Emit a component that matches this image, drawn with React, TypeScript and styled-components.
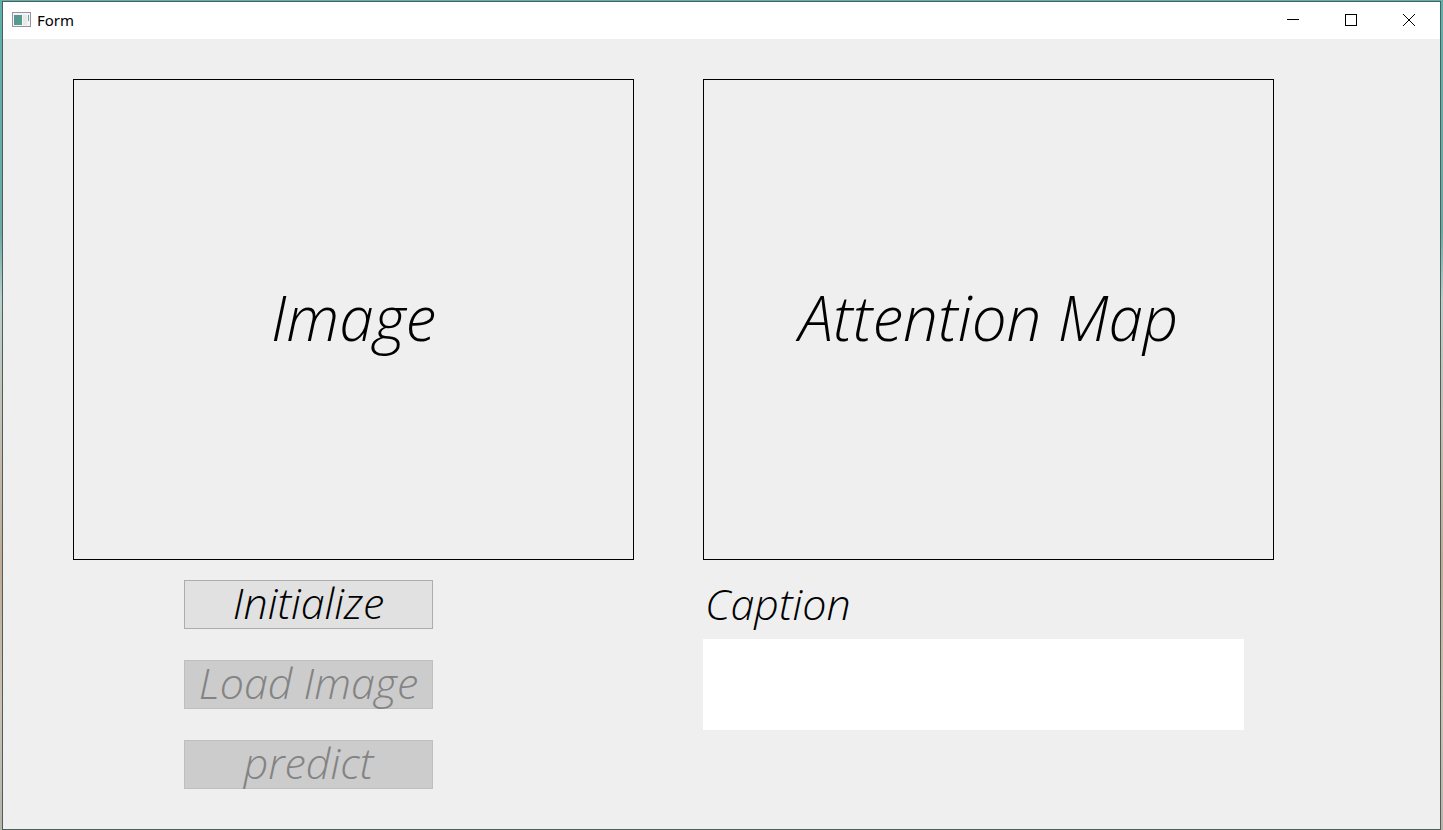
import React from "react";
import styled, { createGlobalStyle } from "styled-components";

const hand = `"Ink Free", "Open Sans", "Noto Sans", sans-serif`;

const GlobalStyle = createGlobalStyle`
  * { box-sizing: border-box; }
  body { margin: 0; }
`;

const Desktop = styled.div`
  min-height: 100vh;
  display: flex;
  padding: 1px 2px 0;
  background: linear-gradient(
    to bottom,
    #5fb0ab 0%,
    #6aaaa5 28%,
    #b9cfca 36%,
    #c4bfb4 50%,
    #c0ab94 68%,
    #c9c0b2 85%,
    #b8b4aa 100%
  );
`;

const Window = styled.div`
  flex: 1;
  display: flex;
  flex-direction: column;
  border: 1px solid #4d5f5c;
  background: #efefef;
`;

const TitleBar = styled.header`
  display: flex;
  align-items: center;
  height: 37px;
  padding: 0 2px 2px 9px;
  background: #fff;
`;

const Title = styled.h1`
  flex: 1;
  margin: 0 0 0 6px;
  font: 400 15px/20px "Noto Sans", "Open Sans", sans-serif;
  color: #000;
`;

const WindowButton = styled.button`
  display: flex;
  align-items: center;
  justify-content: center;
  width: 58px;
  height: 35px;
  padding: 0;
  border: 0;
  background: transparent;
`;

const Content = styled.main`
  display: grid;
  grid-template-columns: minmax(0, 561fr) minmax(0, 571fr);
  column-gap: 69px;
  row-gap: 20px;
  align-content: start;
  padding: 40px 166px 40px 70px;
`;

const Preview = styled.section`
  display: flex;
  align-items: center;
  justify-content: center;
  min-height: 481px;
  padding-bottom: 6px;
  border: 1px solid #000;
`;

const PreviewTitle = styled.h2`
  margin: 0;
  font: italic 300 62px/80px ${hand};
  color: #000;
`;

const Actions = styled.div`
  display: flex;
  flex-direction: column;
  align-items: flex-start;
  gap: 31px;
  padding-left: 111px;
`;

const ActionButton = styled.button`
  width: 249px;
  height: 49px;
  padding: 0 0 4px;
  border: 1px solid #adadad;
  background: #e1e1e1;
  font: italic 300 43px/43px ${hand};
  white-space: nowrap;
  color: #000;

  &:disabled {
    border-color: #bfbfbf;
    background: #ccc;
    color: #838383;
  }
`;

const CaptionField = styled.div`
  display: flex;
  flex-direction: column;
  padding-right: 30px;
`;

const CaptionLabel = styled.label`
  height: 59px;
  padding-left: 2px;
  font: italic 300 43px/48px ${hand};
  color: #000;
`;

const CaptionBox = styled.textarea`
  display: block;
  width: 100%;
  height: 91px;
  padding: 4px;
  border: 0;
  resize: none;
  background: #fff;
  font: italic 300 24px/32px ${hand};
`;

const FormIcon = () => (
  <svg width="19" height="15" viewBox="0 0 19 15" aria-hidden="true">
    <defs>
      <linearGradient id="pane" x1="0" y1="0" x2="1" y2="1">
        <stop offset="0" stopColor="#5d8fa0" />
        <stop offset="1" stopColor="#4fa583" />
      </linearGradient>
    </defs>
    <rect x="0.5" y="0.5" width="18" height="14" fill="#f4f4f4" stroke="#9793a3" />
    <rect x="2" y="3" width="8" height="10" fill="url(#pane)" />
    <rect x="11" y="3" width="4" height="10" fill="#e6e9e7" />
    <rect x="16" y="3" width="1" height="6" fill="#6fa595" />
  </svg>
);

export default function App() {
  return (
    <Desktop>
      <GlobalStyle />
      <Window>
        <TitleBar>
          <FormIcon />
          <Title>Form</Title>
          <WindowButton aria-label="Minimize">
            <svg width="12" height="12" viewBox="0 0 12 12">
              <path d="M0 5.5H12" stroke="#000" />
            </svg>
          </WindowButton>
          <WindowButton aria-label="Maximize">
            <svg width="12" height="12" viewBox="0 0 12 12">
              <rect x="0.5" y="0.5" width="11" height="11" fill="none" stroke="#000" />
            </svg>
          </WindowButton>
          <WindowButton aria-label="Close">
            <svg width="12" height="12" viewBox="0 0 12 12">
              <path d="M0 0L12 12M12 0L0 12" stroke="#000" />
            </svg>
          </WindowButton>
        </TitleBar>
        <Content>
          <Preview>
            <PreviewTitle>Image</PreviewTitle>
          </Preview>
          <Preview>
            <PreviewTitle>Attention Map</PreviewTitle>
          </Preview>
          <Actions>
            <ActionButton>Initialize</ActionButton>
            <ActionButton disabled>Load Image</ActionButton>
            <ActionButton disabled>predict</ActionButton>
          </Actions>
          <CaptionField>
            <CaptionLabel htmlFor="caption">Caption</CaptionLabel>
            <CaptionBox id="caption" />
          </CaptionField>
        </Content>
      </Window>
    </Desktop>
  );
}
